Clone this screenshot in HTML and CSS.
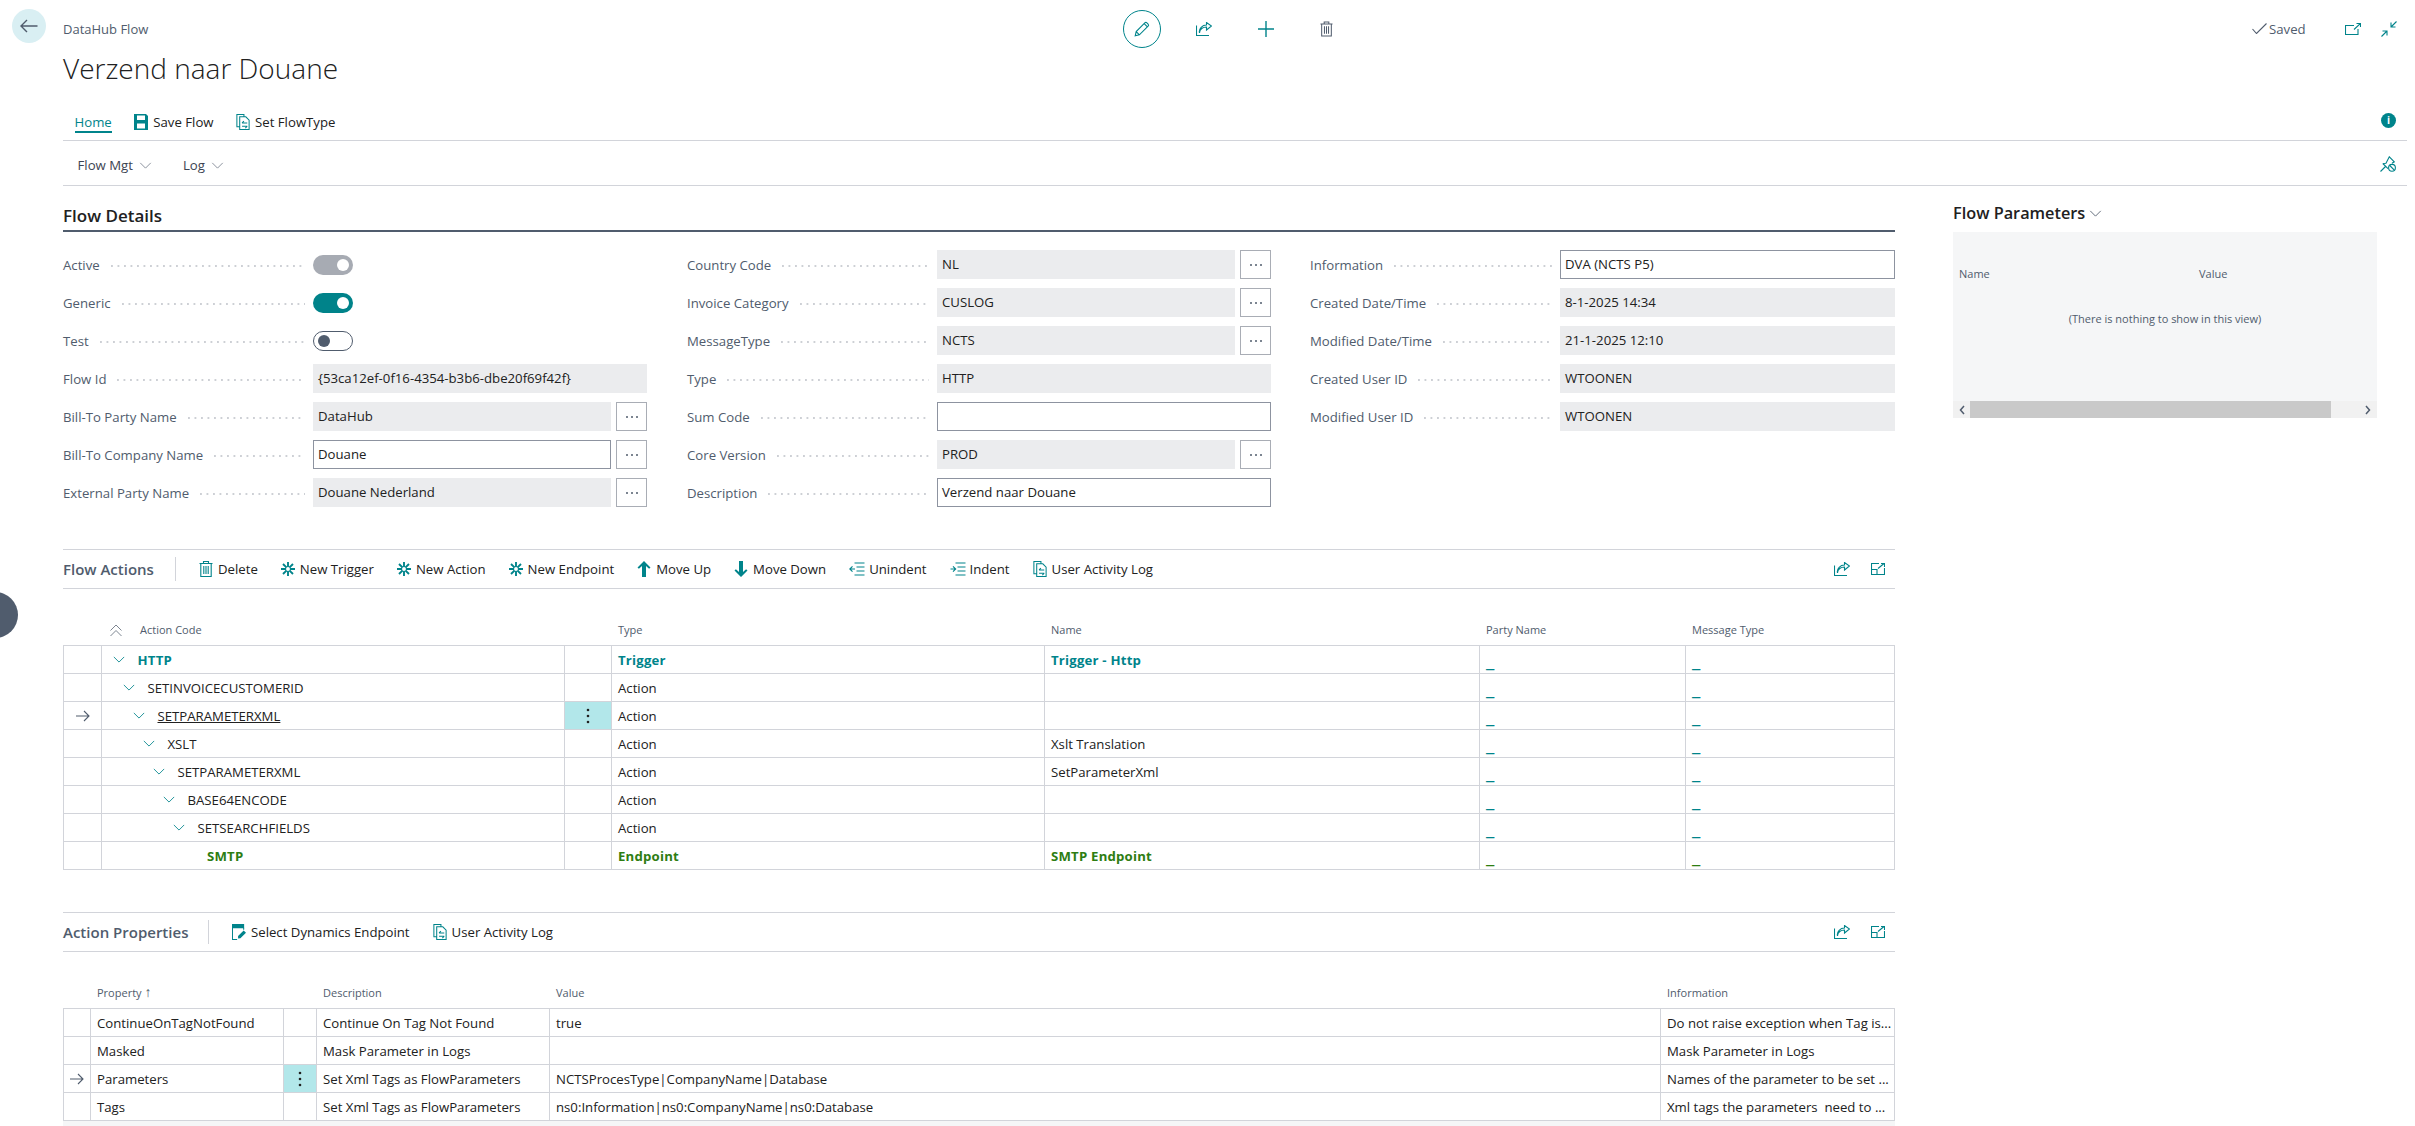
FILE: index.html
```
<!DOCTYPE html>
<html lang="en">
<head>
<meta charset="utf-8">
<title>Verzend naar Douane</title>
<link rel="stylesheet" href="styles.css">
</head>
<body>
<svg class="sprite" aria-hidden="true">
  <symbol id="i-back" viewBox="0 0 18 14"><path d="M17.5 7H1M7 1L1 7l6 6"/></symbol>
  <symbol id="i-pencil" viewBox="0 0 16 16"><path d="M1.2 14.8l1-4.2 8.6-8.7a1.5 1.5 0 0 1 2.1 0l1.2 1.2a1.5 1.5 0 0 1 0 2.1l-8.7 8.6zM2.2 10.6l3.2 3.2M10.2 2.6l3.2 3.2"/></symbol>
  <symbol id="i-share" viewBox="0 0 16 14"><path d="M.5 3.500V13.500H13M3.500 11C3.500 7 7 5 10.500 5V8L15.500 4 10.500 .5V3C6.500 3 2.500 6.500 3.500 11Z"/></symbol>
  <symbol id="i-plus" viewBox="0 0 16 16"><path d="M8 0v16M0 8h16"/></symbol>
  <symbol id="i-trash" viewBox="0 0 14 16"><path d="M.5 2.500h13M4.500 2.500V.5h5v2M1.800 2.500v13h10.400v-13M4.800 5v8M7 5v8M9.200 5v8"/></symbol>
  <symbol id="i-check" viewBox="0 0 15 11"><path d="M.5 6l4 4.500L14.500.5"/></symbol>
  <symbol id="i-open" viewBox="0 0 16 12"><path d="M9 2.500H.5v9h12.500V6M9 6.500L15 .8M11.500.5H15.500V4"/></symbol>
  <symbol id="i-shrink" viewBox="0 0 16 16"><path d="M15.500.5L10 6M10 1.500V6h4.500M.5 15.500L6 10M1.500 10H6v4.500"/></symbol>
  <symbol id="i-pin" viewBox="0 0 16 16"><path d="M.5 15.500L5.500 10.500M2.800 7.500L6 7.300 9.300.8l5 5-2.300 1.500M2.800 7.500L8 12.700"/><circle cx="12" cy="11.800" r="3.400"/><path d="M9.800 9.500l4.500 4.600"/></symbol>
  <symbol id="i-save" viewBox="0 0 14 16"><path class="solid" d="M0 0h12l2 2v14H0zM3 1.500V6h8V1.500zM3 9.500V14.500h8V9.500z"/></symbol>
  <symbol id="i-log" viewBox="0 0 14 17"><path d="M3.500 13.500H.5V.5h7.500v2.500M3.500 3h6.500l3.500 3.500v10H3.500zM6 9.500h5.500M6 9.500l2-2M11.500 13H6M11.500 13l-2 2"/></symbol>
  <symbol id="i-new" viewBox="0 0 14 14"><path class="thick" d="M7 0v4.500M7 9.500V14M0 7h4.500M9.500 7H14M2 2l3.200 3.200M8.800 8.800L12 12M12 2L8.800 5.200M5.200 8.800L2 12"/><circle cx="7" cy="7" r="2.500"/></symbol>
  <symbol id="i-up" viewBox="0 0 14 16"><path class="solid" d="M7 0l6.500 6.500-1.400 1.300L9 5v11H5V5L1.900 7.800.5 6.500z"/></symbol>
  <symbol id="i-down" viewBox="0 0 14 16"><path class="solid" d="M7 16L.5 9.500l1.400-1.300L5 11V0h4v11l3.100-2.800 1.400 1.300z"/></symbol>
  <symbol id="i-unindent" viewBox="0 0 16 14"><path d="M5.500 1h10M7.500 5h8M7.500 9h8M5.500 13h10M6 7H.8M3.500 4.300L.8 7l2.700 2.700"/></symbol>
  <symbol id="i-indent" viewBox="0 0 16 14"><path d="M5.500 1h10M7.500 5h8M7.500 9h8M5.500 13h10M.5 7h5.200M3 4.300L5.700 7 3 9.700"/></symbol>
  <symbol id="i-select" viewBox="0 0 15 17"><path class="solid" d="M0 0h13v4.500H0zM6.500 15.500V12.800l6-6 2.500 2.500-6 6z"/><path d="M.5 4v12.500h5M12.500 4v2"/></symbol>
  <symbol id="i-expand" viewBox="0 0 14 12"><path d="M8 .5H.5v11h13V5M.5 6.500H6v5M7 5.500L13 .5M10 .5h3.500V4"/></symbol>
  <symbol id="i-collapse" viewBox="0 0 12 13"><path d="M.5 6.500L6 1l5.500 5.500M.5 12L6 6.500l5.500 5.500"/></symbol>
  <symbol id="i-arrow" viewBox="0 0 14 12"><path d="M0 6h13M8 1l5 5-5 5"/></symbol>
  <symbol id="i-chev" viewBox="0 0 14 8"><path d="M1 1l6 6 6-6"/></symbol>
  <symbol id="i-kebab" viewBox="0 0 4 16"><circle class="solid" cx="2" cy="2" r="1.300"/><circle class="solid" cx="2" cy="8" r="1.300"/><circle class="solid" cx="2" cy="14" r="1.300"/></symbol>
  <symbol id="i-more" viewBox="0 0 14 4"><circle class="solid" cx="2" cy="2" r="1"/><circle class="solid" cx="7" cy="2" r="1"/><circle class="solid" cx="12" cy="2" r="1"/></symbol>
</svg>

<div class="shell">
  <aside class="rail">
    <button class="back"><svg class="ic ic-back"><use href="#i-back"/></svg></button>
    <span class="float-dot"></span>
  </aside>

  <main class="content">
    <header class="topbar">
      <span class="crumb">DataHub Flow</span>
      <div class="top-actions">
        <span class="pencil"><svg class="ic ic-16"><use href="#i-pencil"/></svg></span>
        <svg class="ic ic-share"><use href="#i-share"/></svg>
        <svg class="ic ic-16 ic-plus"><use href="#i-plus"/></svg>
        <svg class="ic ic-trash"><use href="#i-trash"/></svg>
      </div>
      <div class="top-right">
        <svg class="ic ic-check"><use href="#i-check"/></svg>
        <span class="saved">Saved</span>
        <svg class="ic ic-open"><use href="#i-open"/></svg>
        <svg class="ic ic-16"><use href="#i-shrink"/></svg>
      </div>
    </header>
    <h1 class="title">Verzend naar Douane</h1>

    <nav class="tabs">
      <span class="tab tab-on">Home</span>
      <span class="tab"><svg class="ic ic-tb"><use href="#i-save"/></svg>Save Flow</span>
      <span class="tab"><svg class="ic ic-tb"><use href="#i-log"/></svg>Set FlowType</span>
      <span class="info">i</span>
    </nav>
    <nav class="menus">
      <span class="menu">Flow Mgt<svg class="ic ic-mchev"><use href="#i-chev"/></svg></span>
      <span class="menu">Log<svg class="ic ic-mchev"><use href="#i-chev"/></svg></span>
      <svg class="ic ic-16 pin"><use href="#i-pin"/></svg>
    </nav>

    <div class="columns">
      <div class="primary">
        <h2 class="sec-title">Flow Details</h2>
        <div class="fields">
          <div class="fcol">
            <div class="field"><div class="lbl"><span>Active</span><i class="dots"></i></div><span class="toggle toggle-grey"></span></div>
            <div class="field"><div class="lbl"><span>Generic</span><i class="dots"></i></div><span class="toggle toggle-on"></span></div>
            <div class="field"><div class="lbl"><span>Test</span><i class="dots"></i></div><span class="toggle toggle-off"></span></div>
            <div class="field"><div class="lbl"><span>Flow Id</span><i class="dots"></i></div><div class="val">{53ca12ef-0f16-4354-b3b6-dbe20f69f42f}</div></div>
            <div class="field"><div class="lbl"><span>Bill-To Party Name</span><i class="dots"></i></div><div class="val">DataHub</div><span class="more"><svg class="ic ic-more"><use href="#i-more"/></svg></span></div>
            <div class="field"><div class="lbl"><span>Bill-To Company Name</span><i class="dots"></i></div><div class="val edit">Douane</div><span class="more"><svg class="ic ic-more"><use href="#i-more"/></svg></span></div>
            <div class="field"><div class="lbl"><span>External Party Name</span><i class="dots"></i></div><div class="val">Douane Nederland</div><span class="more"><svg class="ic ic-more"><use href="#i-more"/></svg></span></div>
          </div>
          <div class="fcol">
            <div class="field"><div class="lbl"><span>Country Code</span><i class="dots"></i></div><div class="val">NL</div><span class="more"><svg class="ic ic-more"><use href="#i-more"/></svg></span></div>
            <div class="field"><div class="lbl"><span>Invoice Category</span><i class="dots"></i></div><div class="val">CUSLOG</div><span class="more"><svg class="ic ic-more"><use href="#i-more"/></svg></span></div>
            <div class="field"><div class="lbl"><span>MessageType</span><i class="dots"></i></div><div class="val">NCTS</div><span class="more"><svg class="ic ic-more"><use href="#i-more"/></svg></span></div>
            <div class="field"><div class="lbl"><span>Type</span><i class="dots"></i></div><div class="val">HTTP</div></div>
            <div class="field"><div class="lbl"><span>Sum Code</span><i class="dots"></i></div><div class="val edit"></div></div>
            <div class="field"><div class="lbl"><span>Core Version</span><i class="dots"></i></div><div class="val">PROD</div><span class="more"><svg class="ic ic-more"><use href="#i-more"/></svg></span></div>
            <div class="field"><div class="lbl"><span>Description</span><i class="dots"></i></div><div class="val edit">Verzend naar Douane</div></div>
          </div>
          <div class="fcol">
            <div class="field"><div class="lbl"><span>Information</span><i class="dots"></i></div><div class="val edit">DVA (NCTS P5)</div></div>
            <div class="field"><div class="lbl"><span>Created Date/Time</span><i class="dots"></i></div><div class="val">8-1-2025 14:34</div></div>
            <div class="field"><div class="lbl"><span>Modified Date/Time</span><i class="dots"></i></div><div class="val">21-1-2025 12:10</div></div>
            <div class="field"><div class="lbl"><span>Created User ID</span><i class="dots"></i></div><div class="val">WTOONEN</div></div>
            <div class="field"><div class="lbl"><span>Modified User ID</span><i class="dots"></i></div><div class="val">WTOONEN</div></div>
          </div>
        </div>

        <section class="part">
          <div class="toolbar">
            <h3 class="part-title part-title-a">Flow Actions</h3>
            <span class="tool"><svg class="ic ic-tool"><use href="#i-trash"/></svg>Delete</span>
            <span class="tool"><svg class="ic ic-tool"><use href="#i-new"/></svg>New Trigger</span>
            <span class="tool"><svg class="ic ic-tool"><use href="#i-new"/></svg>New Action</span>
            <span class="tool"><svg class="ic ic-tool"><use href="#i-new"/></svg>New Endpoint</span>
            <span class="tool"><svg class="ic ic-tool"><use href="#i-up"/></svg>Move Up</span>
            <span class="tool"><svg class="ic ic-tool"><use href="#i-down"/></svg>Move Down</span>
            <span class="tool"><svg class="ic ic-wide"><use href="#i-unindent"/></svg>Unindent</span>
            <span class="tool"><svg class="ic ic-wide"><use href="#i-indent"/></svg>Indent</span>
            <span class="tool"><svg class="ic ic-tool"><use href="#i-log"/></svg>User Activity Log</span>
            <span class="tool-end"><svg class="ic ic-share"><use href="#i-share"/></svg><svg class="ic ic-expand"><use href="#i-expand"/></svg></span>
          </div>
          <table class="grid grid-actions">
            <colgroup><col class="a1"><col class="a2"><col class="a3"><col class="a4"><col class="a5"><col class="a6"><col class="a7"></colgroup>
            <thead><tr><th></th><th class="th-code"><svg class="ic ic-coll"><use href="#i-collapse"/></svg>Action Code</th><th></th><th>Type</th><th>Name</th><th>Party Name</th><th>Message Type</th></tr></thead>
            <tbody>
              <tr class="r-trigger"><td></td><td class="lv0"><svg class="ic ic-tree"><use href="#i-chev"/></svg>HTTP</td><td></td><td>Trigger</td><td>Trigger - Http</td><td class="dash">_</td><td class="dash">_</td></tr>
              <tr><td></td><td class="lv1"><svg class="ic ic-tree"><use href="#i-chev"/></svg>SETINVOICECUSTOMERID</td><td></td><td>Action</td><td></td><td class="dash">_</td><td class="dash">_</td></tr>
              <tr><td class="cur"><svg class="ic ic-arrow"><use href="#i-arrow"/></svg></td><td class="lv2"><svg class="ic ic-tree"><use href="#i-chev"/></svg><u>SETPARAMETERXML</u></td><td class="keb"><svg class="ic ic-kebab"><use href="#i-kebab"/></svg></td><td>Action</td><td></td><td class="dash">_</td><td class="dash">_</td></tr>
              <tr><td></td><td class="lv3"><svg class="ic ic-tree"><use href="#i-chev"/></svg>XSLT</td><td></td><td>Action</td><td>Xslt Translation</td><td class="dash">_</td><td class="dash">_</td></tr>
              <tr><td></td><td class="lv4"><svg class="ic ic-tree"><use href="#i-chev"/></svg>SETPARAMETERXML</td><td></td><td>Action</td><td>SetParameterXml</td><td class="dash">_</td><td class="dash">_</td></tr>
              <tr><td></td><td class="lv5"><svg class="ic ic-tree"><use href="#i-chev"/></svg>BASE64ENCODE</td><td></td><td>Action</td><td></td><td class="dash">_</td><td class="dash">_</td></tr>
              <tr><td></td><td class="lv6"><svg class="ic ic-tree"><use href="#i-chev"/></svg>SETSEARCHFIELDS</td><td></td><td>Action</td><td></td><td class="dash">_</td><td class="dash">_</td></tr>
              <tr class="r-endpoint"><td></td><td class="lv7">SMTP</td><td></td><td>Endpoint</td><td>SMTP Endpoint</td><td class="dash">_</td><td class="dash">_</td></tr>
            </tbody>
          </table>
        </section>

        <section class="part">
          <div class="toolbar">
            <h3 class="part-title part-title-p">Action Properties</h3>
            <span class="tool"><svg class="ic ic-tool"><use href="#i-select"/></svg>Select Dynamics Endpoint</span>
            <span class="tool"><svg class="ic ic-tool"><use href="#i-log"/></svg>User Activity Log</span>
            <span class="tool-end"><svg class="ic ic-share"><use href="#i-share"/></svg><svg class="ic ic-expand"><use href="#i-expand"/></svg></span>
          </div>
          <table class="grid grid-props">
            <colgroup><col class="p1"><col class="p2"><col class="p3"><col class="p4"><col class="p5"><col class="p6"></colgroup>
            <thead><tr><th></th><th>Property <span class="sort">↑</span></th><th></th><th>Description</th><th>Value</th><th>Information</th></tr></thead>
            <tbody>
              <tr><td></td><td>ContinueOnTagNotFound</td><td></td><td>Continue On Tag Not Found</td><td>true</td><td>Do not raise exception when Tag is...</td></tr>
              <tr><td></td><td>Masked</td><td></td><td>Mask Parameter in Logs</td><td></td><td>Mask Parameter in Logs</td></tr>
              <tr><td class="cur"><svg class="ic ic-arrow"><use href="#i-arrow"/></svg></td><td>Parameters</td><td class="keb"><svg class="ic ic-kebab"><use href="#i-kebab"/></svg></td><td>Set Xml Tags as FlowParameters</td><td>NCTSProcesType|CompanyName|Database</td><td>Names of the parameter to be set ...</td></tr>
              <tr><td></td><td>Tags</td><td></td><td>Set Xml Tags as FlowParameters</td><td>ns0:Information|ns0:CompanyName|ns0:Database</td><td>Xml tags the parameters&nbsp; need to ...</td></tr>
            </tbody>
          </table>
          <div class="grid-foot"></div>
        </section>
      </div>

      <aside class="factbox">
        <h2 class="fb-title">Flow Parameters<svg class="ic ic-fbchev"><use href="#i-chev"/></svg></h2>
        <div class="fb-panel">
          <div class="fb-head"><span>Name</span><span>Value</span></div>
          <div class="fb-empty">(There is nothing to show in this view)</div>
          <div class="scrollbar">
            <svg class="ic ic-sb ic-sb-l" viewBox="0 0 6 10"><path d="M5 1L1.500 5 5 9"/></svg>
            <span class="thumb"></span>
            <svg class="ic ic-sb ic-sb-r" viewBox="0 0 6 10"><path d="M1 1l3.500 4L1 9"/></svg>
          </div>
        </div>
      </aside>
    </div>
  </main>
</div>
</body>
</html>
```
FILE: styles.css
```
* { box-sizing: border-box; }
html, body { margin: 0; height: 1126px; overflow: hidden; background: #fff; }
body { font: 13.2px/18px "Open Sans", "Noto Sans", sans-serif; color: #212121; }
h1, h2, h3 { margin: 0; }
.sprite { display: none; }

.ic { fill: none; stroke: #00848b; stroke-width: 1.1; flex: none; display: block; overflow: visible; color: #00848b; }
.ic .solid, symbol .solid { fill: currentColor; stroke: none; }
.thick { stroke-width: 1.9; }
.ic-16 { width: 16px; height: 16px; }
.ic-share { width: 16px; height: 14px; }
.ic-expand { width: 14px; height: 12px; }
.ic-plus { stroke-width: 1.4; }

.shell { display: grid; grid-template-columns: 63px 1fr; height: 1126px; }
.rail { position: relative; padding: 9px 0 0 12px; }
.back { width: 34px; height: 34px; padding: 0; border: 0; border-radius: 50%; background: #d9eff3; display: flex; align-items: center; justify-content: center; }
.ic-back { width: 18px; height: 14px; stroke: #505c6d; stroke-width: 1.4; }
.float-dot { position: absolute; left: -28px; top: 592px; width: 46px; height: 46px; border-radius: 50%; background: #505c6d; }

.content { padding-right: 8px; min-width: 0; }
.topbar { display: flex; height: 48px; padding-top: 9px; align-items: center; }
.crumb { width: 1060px; color: #505c6d; font-size: 13px; }
.top-actions { display: flex; align-items: center; gap: 46px; }
.pencil { width: 38px; height: 38px; margin-right: -11px; border: 1px solid #00848b; border-radius: 50%; display: flex; align-items: center; justify-content: center; }
.ic-trash { width: 13px; height: 16px; stroke: #505c6d; }
.top-right { margin-left: auto; display: flex; align-items: center; padding-right: 10px; }
.ic-check { width: 15px; height: 11px; stroke: #505c6d; margin-right: 2px; }
.saved { color: #505c6d; width: 76px; }
.ic-open { width: 16px; height: 12px; margin-right: 20px; }

.title { height: 40px; font-size: 28px; line-height: 40px; font-weight: 300; color: #212121; }

.tabs { display: flex; height: 53px; padding: 22px 11px 0 11.5px; gap: 22.5px; border-bottom: 1px solid #d2d4da; align-items: flex-start; }
.tab { display: flex; align-items: flex-start; height: 23px; line-height: 24px; color: #212121; }
.tab .ic { margin: 4px 5px 0 0; }
.ic-tb { width: 14px; height: 16px; }
.tab-on { color: #00848b; border-bottom: 2px solid #00848b; }
.info { margin-left: auto; margin-top: 3px; width: 15px; height: 15px; border-radius: 50%; background: #00848b; color: #fff; font-size: 10px; font-weight: 700; line-height: 15px; text-align: center; }

.menus { display: flex; height: 45px; padding: 12px 11px 0 14.5px; gap: 31px; border-bottom: 1px solid #d2d4da; align-items: flex-start; }
.menu { display: flex; align-items: center; height: 24px; color: #3c4452; }
.ic-mchev { width: 13px; height: 7px; margin-left: 6px; stroke: #7d8591; stroke-width: 1; }
.pin { margin-left: auto; margin-top: 3px; }

.columns { display: flex; gap: 58px; }
.primary { width: 1832px; flex: none; }
.sec-title { height: 46px; padding-top: 18px; font-size: 17px; line-height: 24px; font-weight: 600; color: #212121; border-bottom: 2px solid #505c6d; }

.fields { display: grid; grid-template-columns: 584px 584px 584px; column-gap: 40px; padding-top: 18px; }
.fields .fcol:last-child { margin-left: -1px; }
.fcol { display: flex; flex-direction: column; gap: 9px; }
.field { display: flex; align-items: center; height: 29px; }
.lbl { width: 242px; margin-right: 8px; flex: none; display: flex; align-items: center; gap: 11px; color: #505c6d; white-space: nowrap; }
.dots { flex: 1; height: 2px; margin-top: 3px; background: linear-gradient(to right, #cdd0d5 2px, transparent 2px) 0 0 / 6.5px 2px repeat-x; }
.val { flex: 1; height: 29px; padding: 0 5px; line-height: 29px; background: #ebecee; color: #212121; white-space: nowrap; }
.val.edit { background: #fff; border: 1px solid #8d93a0; padding: 0 4px; line-height: 27px; }
.more { width: 31px; height: 29px; margin-left: 5px; flex: none; border: 1px solid #a9adb5; display: flex; align-items: center; justify-content: center; background: #fff; }
.ic-more { width: 14px; height: 4px; color: #505c6d; stroke: none; }
.toggle { position: relative; width: 40px; height: 20px; border-radius: 10px; }
.toggle::after { content: ""; position: absolute; top: 50%; width: 12px; height: 12px; margin-top: -6px; border-radius: 50%; }
.toggle-grey { background: #a7abb3; }
.toggle-on { background: #00838a; }
.toggle-grey::after, .toggle-on::after { right: 4px; background: #fff; }
.toggle-off { background: #fff; border: 1px solid #505c6d; }
.toggle-off::after { left: 4px; background: #505c6d; }

.part { margin-top: 42px; }
.toolbar { display: flex; align-items: center; height: 40px; gap: 23px; border-top: 1px solid #d2d4da; border-bottom: 1px solid #d2d4da; }
.part-title { height: 24px; font-size: 15px; line-height: 24px; font-weight: 600; color: #505c6d; border-right: 1px solid #d2d4da; }
.part-title-a { width: 113px; }
.part-title-p { width: 146px; }
.tool { display: flex; align-items: center; color: #212121; white-space: nowrap; }
.ic-tool { width: 14px; height: 16px; margin-right: 5px; }
.ic-wide { width: 16px; height: 14px; margin-right: 4px; }
.tool-end { margin-left: auto; display: flex; align-items: center; gap: 21px; padding-right: 10px; }

.grid { width: 1832px; table-layout: fixed; border-collapse: separate; border-spacing: 0; }
.grid th { height: 57px; padding: 0 0 7px 6px; vertical-align: bottom; text-align: left; font-size: 11px; line-height: 16px; font-weight: 400; color: #505c6d; border-bottom: 1px solid #d2d4da; white-space: nowrap; }
.grid td { height: 28px; padding: 0 6px; border-right: 1px solid #d2d4da; border-bottom: 1px solid #d2d4da; white-space: nowrap; overflow: hidden; }
.grid td:first-child { border-left: 1px solid #d2d4da; }
.a1 { width: 39px; } .a2 { width: 463px; } .a3 { width: 47px; } .a4 { width: 433px; } .a5 { width: 435px; } .a6 { width: 206px; } .a7 { width: 209px; }
.p1 { width: 28px; } .p2 { width: 193px; } .p3 { width: 33px; } .p4 { width: 233px; } .p5 { width: 1111px; } .p6 { width: 234px; }

.grid td.cur { padding: 0; }
.ic-arrow { width: 14px; height: 12px; margin: 0 auto; stroke: #505c6d; }
.grid td.keb { padding: 0; background: #b2e7ea; }
.ic-kebab { width: 4px; height: 16px; margin: 0 auto; color: #212121; stroke: none; }

.grid th.th-code { padding-left: 8px; }
.ic-coll { display: inline-block; width: 12px; height: 13px; margin: 0 18px -3px 0; stroke: #7d8591; stroke-width: 1; }
.ic-tree { display: inline-block; width: 12px; height: 7px; margin-right: 12.5px; vertical-align: 2px; stroke-width: 1; }
.grid td.lv0 { padding-left: 11px; }
.grid td.lv1 { padding-left: 21px; }
.grid td.lv2 { padding-left: 31px; }
.grid td.lv3 { padding-left: 41px; }
.grid td.lv4 { padding-left: 51px; }
.grid td.lv5 { padding-left: 61px; }
.grid td.lv6 { padding-left: 71px; }
.grid td.lv7 { padding-left: 105px; }
.r-trigger td { color: #00848b; font-weight: 700; letter-spacing: .2px; }
.r-endpoint td { color: #2e7d12; font-weight: 700; letter-spacing: .2px; }
.grid td.dash { color: #00848b; font-size: 19px; font-weight: 400; line-height: 18px; letter-spacing: 0; }
.r-endpoint td.dash { color: #2e7d12; }
.sort { color: #505c6d; font-size: 14px; line-height: 14px; }
.grid-foot { height: 20px; background: #f5f6f7; }

.factbox { width: 424px; flex: none; }
.fb-title { height: 46px; padding-top: 15px; display: flex; align-items: flex-start; font-size: 16.3px; line-height: 24px; font-weight: 600; color: #212121; }
.ic-fbchev { width: 13px; height: 7px; margin: 9px 0 0 4px; stroke: #505c6d; stroke-width: 1; }
.fb-panel { height: 186px; background: #f5f6f7; display: flex; flex-direction: column; font-size: 11px; color: #505c6d; }
.fb-head { display: grid; grid-template-columns: 240px 1fr; padding: 34px 6px 0; line-height: 16px; }
.fb-empty { margin-top: 29px; text-align: center; line-height: 16px; }
.scrollbar { margin-top: auto; height: 17px; background: #f1f1f1; display: flex; align-items: center; }
.ic-sb { width: 6px; height: 10px; stroke: #505c6d; stroke-width: 1.5; }
.ic-sb-l { margin: 0 5px 0 6px; }
.ic-sb-r { margin-left: 34px; }
.thumb { width: 361px; height: 17px; background: #c9c9c9; }
```
